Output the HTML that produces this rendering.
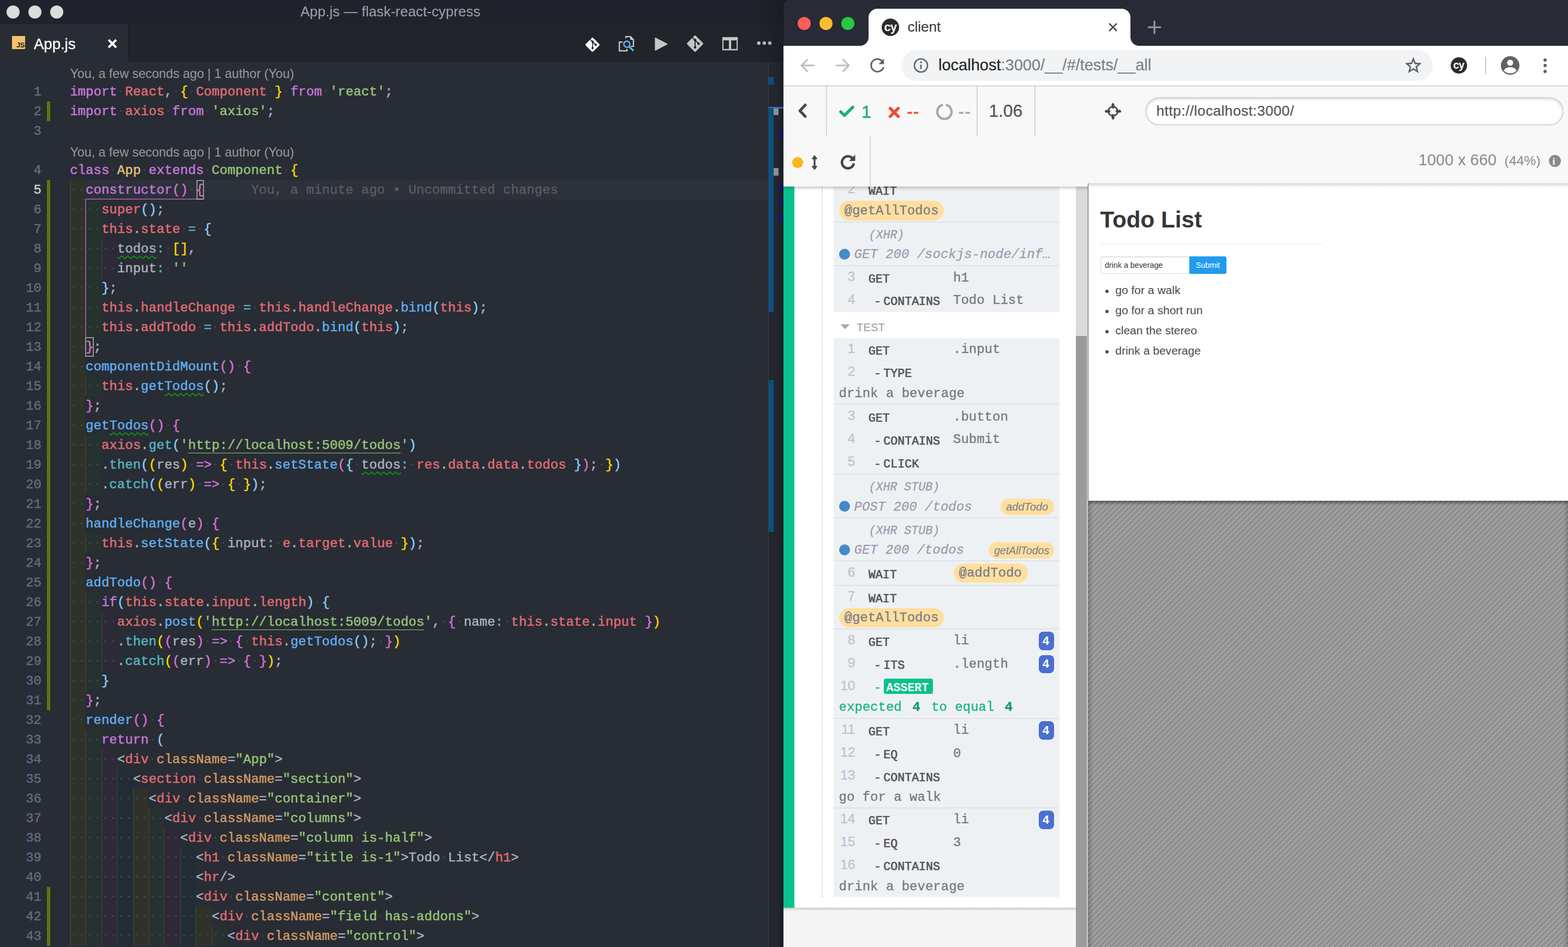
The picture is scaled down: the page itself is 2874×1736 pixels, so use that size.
<!DOCTYPE html>
<html lang="en">
<head>
<meta charset="utf-8">
<title>App.js — flask-react-cypress</title>
<style>
*{box-sizing:border-box;margin:0;padding:0}
html,body{width:2874px;height:1736px;overflow:hidden;background:#17181d}
body{position:relative;font-family:"Liberation Sans",sans-serif}
.abs,#vs div,#vs span,#ch div,#ch span,#ch svg,#vs svg{position:absolute}
#vs{position:absolute;left:0;top:0;width:1436px;height:1736px;background:#282c34;overflow:hidden}
#vs .title{left:0;top:0;width:1436px;height:44px;background:#20232b}
#vs .title .tt{left:0;width:1431px;top:-1px;height:44px;line-height:44px;text-align:center;color:#9da2ad;font-size:25.7px;letter-spacing:0.1px}
#vs .dot{width:24px;height:24px;border-radius:50%;background:#dcdcdc;top:10px}
#vs .tabs{left:0;top:44px;width:1436px;height:70px;background:#21252b}
#vs .tab{left:0;top:0;width:235.8px;height:70px;background:#282c34;border-right:1.6px solid #181a1f}
#vs .tab .nm{left:62px;top:2px;height:70px;line-height:70px;-webkit-text-stroke:0.3px #fff;color:#fff;font-size:27.5px}
#vs .jsic{left:22px;top:22px;width:24px;height:24px;background:#f5c26b}
#vs .jsic span{right:1px;bottom:0px;font-size:13px;line-height:14px;font-weight:bold;color:#21252b;letter-spacing:-0.5px}
#ed{left:0;top:0;width:1436px;height:1736px}
#ed .ln{left:0;width:76px;height:36px;margin-top:1px;-webkit-text-stroke:0.4px currentColor;line-height:36px;text-align:right;color:#636d83;font:24px/36px "Liberation Mono",monospace}
#ed .ln.cur{color:#d0d4dc}
#ed .cl{left:128.2px;height:36px;margin-top:1px;letter-spacing:0.03px;-webkit-text-stroke:0.5px currentColor;white-space:pre;font:24px/36px "Liberation Mono",monospace;color:#abb2bf}
#ed .cl b{font-weight:normal;position:relative}
#ed .cl i{font-style:normal;position:static;background:linear-gradient(90deg,transparent 5.4px,#3e4452 5.4px,#3e4452 8.4px,transparent 8.4px) 0 calc(50% - 0.9px)/14.43px 3px repeat-x}
#ed .cl .ul{text-decoration:underline;text-decoration-thickness:1.4px;text-underline-offset:6.5px;text-decoration-skip-ink:none}
#ed .cl .sq{background:repeating-linear-gradient(90deg,transparent 0,transparent 0) ;text-decoration:underline wavy #14901a;text-decoration-thickness:1.5px;text-underline-offset:5px;text-decoration-skip-ink:none}
#ed .cl .bx{outline:2px solid #8a8d93;outline-offset:-1px}
#ed .blame{color:#595c63;position:static}
#ed .rb{height:36px}
#ed .gbar{left:86px;width:6px;background:#587c0c}
#ed .curline{left:128px;width:1280px;height:36px;background:#2c313a}
#ed .lens{left:128.5px;height:36px;line-height:42px;font-size:23.2px;color:#999;white-space:pre}
#ed .sc{background:#955597}
#ed .bxx{width:16px;height:36px;border:2px solid #949494}
#ov{left:1408px;top:114px;width:28px;height:1622px;background:#23262e;border-left:1px solid #3a3d44}
#ov div{position:absolute}
#vs .shadow{left:1380px;top:0;width:56px;height:114px;background:linear-gradient(90deg,rgba(0,0,0,0),rgba(0,0,0,.2) 96%,rgba(0,0,0,.38) 100%)}
#vs .shadow2{left:1424px;top:114px;width:12px;height:1622px;background:linear-gradient(90deg,rgba(0,0,0,0),rgba(0,0,0,.22))}
#ch{position:absolute;left:1436px;top:0;width:1438px;height:1736px;background:#282a36;overflow:hidden;border-top-left-radius:9px}
</style>
</head>
<body>
<div id="vs">
<div class="tabs">
  <div class="tab"><div class="jsic"><span>JS</span></div><span class="nm">App.js</span>
  <svg style="left:197px;top:27px" width="18" height="18" viewBox="0 0 18 18"><path d="M2 2L16 16M16 2L2 16" stroke="#fff" stroke-width="4" fill="none"/></svg></div>
  <svg style="left:1070px;top:22px" width="32" height="32" viewBox="0 0 32 32"><rect x="6.3" y="6.3" width="19.4" height="19.4" rx="2" transform="rotate(45 16 16)" fill="#fff"/><path d="M11.6 6.2L16.2 10.6L21.6 16.2M16.2 10.6V22" stroke="#21252b" stroke-width="1.7" fill="none"/><circle cx="16.2" cy="10.4" r="2.1" fill="#21252b"/><circle cx="21.8" cy="16.2" r="2.1" fill="#21252b"/><circle cx="16.2" cy="22.1" r="2.1" fill="#21252b"/></svg>
<svg style="left:1130px;top:18px" width="36" height="36" viewBox="0 0 36 36"><path d="M17.2 8.3V5.2H25.6L31 10.6V23H26.5" stroke="#d0d0d0" stroke-width="2.2" fill="none"/><path d="M25.2 5.2V11H31Z" fill="#d0d0d0"/><path d="M11.5 15.2H5.2V31.2H19.2V27.5" stroke="#d0d0d0" stroke-width="2.2" fill="none"/><circle cx="19" cy="19.1" r="5.6" stroke="#6cbcf8" stroke-width="2.3" fill="none"/><path d="M23 23.3L31.2 31.2" stroke="#6cbcf8" stroke-width="3" fill="none"/></svg>
<svg style="left:1198px;top:22px" width="28" height="30" viewBox="0 0 28 30"><path d="M3.2 3.6L24.6 14.8L3.2 26Z" fill="#c5c5c5" stroke="#c5c5c5" stroke-width="1.6" stroke-linejoin="round"/></svg>
<svg style="left:1256px;top:18px" width="36" height="36" viewBox="0 0 36 36"><rect x="6.9" y="6.9" width="22.2" height="22.2" rx="2.2" transform="rotate(45 18 18)" fill="#c5c5c5"/><path d="M12.8 6.6L18 11.6L24.2 18M18 11.6V24.6" stroke="#21252b" stroke-width="1.9" fill="none"/><circle cx="18" cy="11.5" r="2.4" fill="#21252b"/><circle cx="24.4" cy="18.1" r="2.4" fill="#21252b"/><circle cx="18" cy="24.8" r="2.4" fill="#21252b"/></svg>
<svg style="left:1322px;top:22px" width="32" height="28" viewBox="0 0 32 28"><path d="M2 1.9H30.2V26.2H2ZM4.1 8.1V23.8H14V8.1ZM18.1 8.1V23.8H28.1V8.1Z" fill="#c5c5c5" fill-rule="evenodd"/></svg>
<svg style="left:1386px;top:30px" width="30" height="10" viewBox="0 0 30 10"><circle cx="4.8" cy="5" r="3.2" fill="#c5c5c5"/><circle cx="14.9" cy="5" r="3.2" fill="#c5c5c5"/><circle cx="25" cy="5" r="3.2" fill="#c5c5c5"/></svg>

</div>
<div id="ed">
<div class="curline" style="top:330px"></div>
<div class="gbar" style="top:186px;height:36px"></div>
<div class="gbar" style="top:330px;height:972px"></div>
<div class="gbar" style="top:1626px;height:108px"></div>
<div class="ln" style="top:150px">1</div>
<div class="ln" style="top:186px">2</div>
<div class="ln" style="top:222px">3</div>
<div class="ln" style="top:294px">4</div>
<div class="ln cur" style="top:330px">5</div>
<div class="rb" style="top:330px;left:128px;width:28px;background:#2f3228;border-left:2px solid #3c3f35"></div>
<div class="ln" style="top:366px">6</div>
<div class="rb" style="top:366px;left:128px;width:28px;background:#2f3228;border-left:2px solid #3c3f35"></div>
<div class="rb" style="top:366px;left:156px;width:30px;background:#25322e;border-left:2px solid #32403c"></div>
<div class="ln" style="top:402px">7</div>
<div class="rb" style="top:402px;left:128px;width:28px;background:#2f3228;border-left:2px solid #3c3f35"></div>
<div class="rb" style="top:402px;left:156px;width:30px;background:#25322e;border-left:2px solid #32403c"></div>
<div class="ln" style="top:438px">8</div>
<div class="rb" style="top:438px;left:128px;width:28px;background:#2f3228;border-left:2px solid #3c3f35"></div>
<div class="rb" style="top:438px;left:156px;width:30px;background:#25322e;border-left:2px solid #32403c"></div>
<div class="rb" style="top:438px;left:186px;width:28px;background:#2e2937;border-left:2px solid #3c3547"></div>
<div class="ln" style="top:474px">9</div>
<div class="rb" style="top:474px;left:128px;width:28px;background:#2f3228;border-left:2px solid #3c3f35"></div>
<div class="rb" style="top:474px;left:156px;width:30px;background:#25322e;border-left:2px solid #32403c"></div>
<div class="rb" style="top:474px;left:186px;width:28px;background:#2e2937;border-left:2px solid #3c3547"></div>
<div class="ln" style="top:510px">10</div>
<div class="rb" style="top:510px;left:128px;width:28px;background:#2f3228;border-left:2px solid #3c3f35"></div>
<div class="rb" style="top:510px;left:156px;width:30px;background:#25322e;border-left:2px solid #32403c"></div>
<div class="ln" style="top:546px">11</div>
<div class="rb" style="top:546px;left:128px;width:28px;background:#2f3228;border-left:2px solid #3c3f35"></div>
<div class="rb" style="top:546px;left:156px;width:30px;background:#25322e;border-left:2px solid #32403c"></div>
<div class="ln" style="top:582px">12</div>
<div class="rb" style="top:582px;left:128px;width:28px;background:#2f3228;border-left:2px solid #3c3f35"></div>
<div class="rb" style="top:582px;left:156px;width:30px;background:#25322e;border-left:2px solid #32403c"></div>
<div class="ln" style="top:618px">13</div>
<div class="rb" style="top:618px;left:128px;width:28px;background:#2f3228;border-left:2px solid #3c3f35"></div>
<div class="ln" style="top:654px">14</div>
<div class="rb" style="top:654px;left:128px;width:28px;background:#2f3228;border-left:2px solid #3c3f35"></div>
<div class="ln" style="top:690px">15</div>
<div class="rb" style="top:690px;left:128px;width:28px;background:#2f3228;border-left:2px solid #3c3f35"></div>
<div class="rb" style="top:690px;left:156px;width:30px;background:#25322e;border-left:2px solid #32403c"></div>
<div class="ln" style="top:726px">16</div>
<div class="rb" style="top:726px;left:128px;width:28px;background:#2f3228;border-left:2px solid #3c3f35"></div>
<div class="ln" style="top:762px">17</div>
<div class="rb" style="top:762px;left:128px;width:28px;background:#2f3228;border-left:2px solid #3c3f35"></div>
<div class="ln" style="top:798px">18</div>
<div class="rb" style="top:798px;left:128px;width:28px;background:#2f3228;border-left:2px solid #3c3f35"></div>
<div class="rb" style="top:798px;left:156px;width:30px;background:#25322e;border-left:2px solid #32403c"></div>
<div class="ln" style="top:834px">19</div>
<div class="rb" style="top:834px;left:128px;width:28px;background:#2f3228;border-left:2px solid #3c3f35"></div>
<div class="rb" style="top:834px;left:156px;width:30px;background:#25322e;border-left:2px solid #32403c"></div>
<div class="ln" style="top:870px">20</div>
<div class="rb" style="top:870px;left:128px;width:28px;background:#2f3228;border-left:2px solid #3c3f35"></div>
<div class="rb" style="top:870px;left:156px;width:30px;background:#25322e;border-left:2px solid #32403c"></div>
<div class="ln" style="top:906px">21</div>
<div class="rb" style="top:906px;left:128px;width:28px;background:#2f3228;border-left:2px solid #3c3f35"></div>
<div class="ln" style="top:942px">22</div>
<div class="rb" style="top:942px;left:128px;width:28px;background:#2f3228;border-left:2px solid #3c3f35"></div>
<div class="ln" style="top:978px">23</div>
<div class="rb" style="top:978px;left:128px;width:28px;background:#2f3228;border-left:2px solid #3c3f35"></div>
<div class="rb" style="top:978px;left:156px;width:30px;background:#25322e;border-left:2px solid #32403c"></div>
<div class="ln" style="top:1014px">24</div>
<div class="rb" style="top:1014px;left:128px;width:28px;background:#2f3228;border-left:2px solid #3c3f35"></div>
<div class="ln" style="top:1050px">25</div>
<div class="rb" style="top:1050px;left:128px;width:28px;background:#2f3228;border-left:2px solid #3c3f35"></div>
<div class="ln" style="top:1086px">26</div>
<div class="rb" style="top:1086px;left:128px;width:28px;background:#2f3228;border-left:2px solid #3c3f35"></div>
<div class="rb" style="top:1086px;left:156px;width:30px;background:#25322e;border-left:2px solid #32403c"></div>
<div class="ln" style="top:1122px">27</div>
<div class="rb" style="top:1122px;left:128px;width:28px;background:#2f3228;border-left:2px solid #3c3f35"></div>
<div class="rb" style="top:1122px;left:156px;width:30px;background:#25322e;border-left:2px solid #32403c"></div>
<div class="rb" style="top:1122px;left:186px;width:28px;background:#2e2937;border-left:2px solid #3c3547"></div>
<div class="ln" style="top:1158px">28</div>
<div class="rb" style="top:1158px;left:128px;width:28px;background:#2f3228;border-left:2px solid #3c3f35"></div>
<div class="rb" style="top:1158px;left:156px;width:30px;background:#25322e;border-left:2px solid #32403c"></div>
<div class="rb" style="top:1158px;left:186px;width:28px;background:#2e2937;border-left:2px solid #3c3547"></div>
<div class="ln" style="top:1194px">29</div>
<div class="rb" style="top:1194px;left:128px;width:28px;background:#2f3228;border-left:2px solid #3c3f35"></div>
<div class="rb" style="top:1194px;left:156px;width:30px;background:#25322e;border-left:2px solid #32403c"></div>
<div class="rb" style="top:1194px;left:186px;width:28px;background:#2e2937;border-left:2px solid #3c3547"></div>
<div class="ln" style="top:1230px">30</div>
<div class="rb" style="top:1230px;left:128px;width:28px;background:#2f3228;border-left:2px solid #3c3f35"></div>
<div class="rb" style="top:1230px;left:156px;width:30px;background:#25322e;border-left:2px solid #32403c"></div>
<div class="ln" style="top:1266px">31</div>
<div class="rb" style="top:1266px;left:128px;width:28px;background:#2f3228;border-left:2px solid #3c3f35"></div>
<div class="ln" style="top:1302px">32</div>
<div class="rb" style="top:1302px;left:128px;width:28px;background:#2f3228;border-left:2px solid #3c3f35"></div>
<div class="ln" style="top:1338px">33</div>
<div class="rb" style="top:1338px;left:128px;width:28px;background:#2f3228;border-left:2px solid #3c3f35"></div>
<div class="rb" style="top:1338px;left:156px;width:30px;background:#25322e;border-left:2px solid #32403c"></div>
<div class="ln" style="top:1374px">34</div>
<div class="rb" style="top:1374px;left:128px;width:28px;background:#2f3228;border-left:2px solid #3c3f35"></div>
<div class="rb" style="top:1374px;left:156px;width:30px;background:#25322e;border-left:2px solid #32403c"></div>
<div class="rb" style="top:1374px;left:186px;width:28px;background:#2e2937;border-left:2px solid #3c3547"></div>
<div class="ln" style="top:1410px">35</div>
<div class="rb" style="top:1410px;left:128px;width:28px;background:#2f3228;border-left:2px solid #3c3f35"></div>
<div class="rb" style="top:1410px;left:156px;width:30px;background:#25322e;border-left:2px solid #32403c"></div>
<div class="rb" style="top:1410px;left:186px;width:28px;background:#2e2937;border-left:2px solid #3c3547"></div>
<div class="rb" style="top:1410px;left:214px;width:30px;background:#212d34;border-left:2px solid #2d3c44"></div>
<div class="ln" style="top:1446px">36</div>
<div class="rb" style="top:1446px;left:128px;width:28px;background:#2f3228;border-left:2px solid #3c3f35"></div>
<div class="rb" style="top:1446px;left:156px;width:30px;background:#25322e;border-left:2px solid #32403c"></div>
<div class="rb" style="top:1446px;left:186px;width:28px;background:#2e2937;border-left:2px solid #3c3547"></div>
<div class="rb" style="top:1446px;left:214px;width:30px;background:#212d34;border-left:2px solid #2d3c44"></div>
<div class="rb" style="top:1446px;left:244px;width:28px;background:#2f3228;border-left:2px solid #3c3f35"></div>
<div class="ln" style="top:1482px">37</div>
<div class="rb" style="top:1482px;left:128px;width:28px;background:#2f3228;border-left:2px solid #3c3f35"></div>
<div class="rb" style="top:1482px;left:156px;width:30px;background:#25322e;border-left:2px solid #32403c"></div>
<div class="rb" style="top:1482px;left:186px;width:28px;background:#2e2937;border-left:2px solid #3c3547"></div>
<div class="rb" style="top:1482px;left:214px;width:30px;background:#212d34;border-left:2px solid #2d3c44"></div>
<div class="rb" style="top:1482px;left:244px;width:28px;background:#2f3228;border-left:2px solid #3c3f35"></div>
<div class="rb" style="top:1482px;left:272px;width:28px;background:#25322e;border-left:2px solid #32403c"></div>
<div class="ln" style="top:1518px">38</div>
<div class="rb" style="top:1518px;left:128px;width:28px;background:#2f3228;border-left:2px solid #3c3f35"></div>
<div class="rb" style="top:1518px;left:156px;width:30px;background:#25322e;border-left:2px solid #32403c"></div>
<div class="rb" style="top:1518px;left:186px;width:28px;background:#2e2937;border-left:2px solid #3c3547"></div>
<div class="rb" style="top:1518px;left:214px;width:30px;background:#212d34;border-left:2px solid #2d3c44"></div>
<div class="rb" style="top:1518px;left:244px;width:28px;background:#2f3228;border-left:2px solid #3c3f35"></div>
<div class="rb" style="top:1518px;left:272px;width:28px;background:#25322e;border-left:2px solid #32403c"></div>
<div class="rb" style="top:1518px;left:300px;width:30px;background:#2e2937;border-left:2px solid #3c3547"></div>
<div class="ln" style="top:1554px">39</div>
<div class="rb" style="top:1554px;left:128px;width:28px;background:#2f3228;border-left:2px solid #3c3f35"></div>
<div class="rb" style="top:1554px;left:156px;width:30px;background:#25322e;border-left:2px solid #32403c"></div>
<div class="rb" style="top:1554px;left:186px;width:28px;background:#2e2937;border-left:2px solid #3c3547"></div>
<div class="rb" style="top:1554px;left:214px;width:30px;background:#212d34;border-left:2px solid #2d3c44"></div>
<div class="rb" style="top:1554px;left:244px;width:28px;background:#2f3228;border-left:2px solid #3c3f35"></div>
<div class="rb" style="top:1554px;left:272px;width:28px;background:#25322e;border-left:2px solid #32403c"></div>
<div class="rb" style="top:1554px;left:300px;width:30px;background:#2e2937;border-left:2px solid #3c3547"></div>
<div class="rb" style="top:1554px;left:330px;width:28px;background:#212d34;border-left:2px solid #2d3c44"></div>
<div class="ln" style="top:1590px">40</div>
<div class="rb" style="top:1590px;left:128px;width:28px;background:#2f3228;border-left:2px solid #3c3f35"></div>
<div class="rb" style="top:1590px;left:156px;width:30px;background:#25322e;border-left:2px solid #32403c"></div>
<div class="rb" style="top:1590px;left:186px;width:28px;background:#2e2937;border-left:2px solid #3c3547"></div>
<div class="rb" style="top:1590px;left:214px;width:30px;background:#212d34;border-left:2px solid #2d3c44"></div>
<div class="rb" style="top:1590px;left:244px;width:28px;background:#2f3228;border-left:2px solid #3c3f35"></div>
<div class="rb" style="top:1590px;left:272px;width:28px;background:#25322e;border-left:2px solid #32403c"></div>
<div class="rb" style="top:1590px;left:300px;width:30px;background:#2e2937;border-left:2px solid #3c3547"></div>
<div class="rb" style="top:1590px;left:330px;width:28px;background:#212d34;border-left:2px solid #2d3c44"></div>
<div class="ln" style="top:1626px">41</div>
<div class="rb" style="top:1626px;left:128px;width:28px;background:#2f3228;border-left:2px solid #3c3f35"></div>
<div class="rb" style="top:1626px;left:156px;width:30px;background:#25322e;border-left:2px solid #32403c"></div>
<div class="rb" style="top:1626px;left:186px;width:28px;background:#2e2937;border-left:2px solid #3c3547"></div>
<div class="rb" style="top:1626px;left:214px;width:30px;background:#212d34;border-left:2px solid #2d3c44"></div>
<div class="rb" style="top:1626px;left:244px;width:28px;background:#2f3228;border-left:2px solid #3c3f35"></div>
<div class="rb" style="top:1626px;left:272px;width:28px;background:#25322e;border-left:2px solid #32403c"></div>
<div class="rb" style="top:1626px;left:300px;width:30px;background:#2e2937;border-left:2px solid #3c3547"></div>
<div class="rb" style="top:1626px;left:330px;width:28px;background:#212d34;border-left:2px solid #2d3c44"></div>
<div class="ln" style="top:1662px">42</div>
<div class="rb" style="top:1662px;left:128px;width:28px;background:#2f3228;border-left:2px solid #3c3f35"></div>
<div class="rb" style="top:1662px;left:156px;width:30px;background:#25322e;border-left:2px solid #32403c"></div>
<div class="rb" style="top:1662px;left:186px;width:28px;background:#2e2937;border-left:2px solid #3c3547"></div>
<div class="rb" style="top:1662px;left:214px;width:30px;background:#212d34;border-left:2px solid #2d3c44"></div>
<div class="rb" style="top:1662px;left:244px;width:28px;background:#2f3228;border-left:2px solid #3c3f35"></div>
<div class="rb" style="top:1662px;left:272px;width:28px;background:#25322e;border-left:2px solid #32403c"></div>
<div class="rb" style="top:1662px;left:300px;width:30px;background:#2e2937;border-left:2px solid #3c3547"></div>
<div class="rb" style="top:1662px;left:330px;width:28px;background:#212d34;border-left:2px solid #2d3c44"></div>
<div class="rb" style="top:1662px;left:358px;width:30px;background:#2f3228;border-left:2px solid #3c3f35"></div>
<div class="ln" style="top:1698px">43</div>
<div class="rb" style="top:1698px;left:128px;width:28px;background:#2f3228;border-left:2px solid #3c3f35"></div>
<div class="rb" style="top:1698px;left:156px;width:30px;background:#25322e;border-left:2px solid #32403c"></div>
<div class="rb" style="top:1698px;left:186px;width:28px;background:#2e2937;border-left:2px solid #3c3547"></div>
<div class="rb" style="top:1698px;left:214px;width:30px;background:#212d34;border-left:2px solid #2d3c44"></div>
<div class="rb" style="top:1698px;left:244px;width:28px;background:#2f3228;border-left:2px solid #3c3f35"></div>
<div class="rb" style="top:1698px;left:272px;width:28px;background:#25322e;border-left:2px solid #32403c"></div>
<div class="rb" style="top:1698px;left:300px;width:30px;background:#2e2937;border-left:2px solid #3c3547"></div>
<div class="rb" style="top:1698px;left:330px;width:28px;background:#212d34;border-left:2px solid #2d3c44"></div>
<div class="rb" style="top:1698px;left:358px;width:30px;background:#2f3228;border-left:2px solid #3c3f35"></div>
<div class="rb" style="top:1698px;left:388px;width:28px;background:#25322e;border-left:2px solid #32403c"></div>
<div class="sc" style="left:156px;top:364px;width:218px;height:2px"></div>
<div class="sc" style="left:156px;top:364px;width:1.8px;height:254px"></div>
<div class="bxx" style="left:360px;top:330px;width:14px;background:#25322e;border-bottom-color:#c98ac5"></div>
<div class="bxx" style="left:156px;top:618px;background:#25322e"></div>
<div class="cl" style="top:150px"><b style="color:#c678dd">import</b><i> </i><b style="color:#e06c75">React</b><b style="color:#abb2bf">,</b><i> </i><b style="color:#ffd700">{</b><i> </i><b style="color:#e06c75">Component</b><i> </i><b style="color:#ffd700">}</b><i> </i><b style="color:#c678dd">from</b><i> </i><b style="color:#98c379">'react'</b><b style="color:#abb2bf">;</b></div>
<div class="cl" style="top:186px"><b style="color:#c678dd">import</b><i> </i><b style="color:#e06c75">axios</b><i> </i><b style="color:#c678dd">from</b><i> </i><b style="color:#98c379">'axios'</b><b style="color:#abb2bf">;</b></div>
<div class="cl" style="top:294px"><b style="color:#c678dd">class</b><i> </i><b style="color:#e5c07b">App</b><i> </i><b style="color:#c678dd">extends</b><i> </i><b style="color:#98c379">Component</b><i> </i><b style="color:#ffd700">{</b></div>
<div class="cl" style="top:330px"><i>  </i><b style="color:#c678dd">constructor</b><b style="color:#da70d6">()</b><i> </i><b style="color:#da70d6">{</b><span class="blame">      You, a minute ago • Uncommitted changes</span></div>
<div class="cl" style="top:366px"><i>    </i><b style="color:#e06c75">super</b><b style="color:#87cefa">()</b><b style="color:#abb2bf">;</b></div>
<div class="cl" style="top:402px"><i>    </i><b style="color:#e06c75">this</b><b style="color:#abb2bf">.</b><b style="color:#e06c75">state</b><i> </i><b style="color:#56b6c2">=</b><i> </i><b style="color:#87cefa">{</b></div>
<div class="cl" style="top:438px"><i>      </i><b class="sq" style="color:#abb2bf">todos</b><b style="color:#56b6c2">:</b><i> </i><b style="color:#ffd700">[]</b><b style="color:#abb2bf">,</b></div>
<div class="cl" style="top:474px"><i>      </i><b style="color:#abb2bf">input</b><b style="color:#56b6c2">:</b><i> </i><b style="color:#98c379">''</b></div>
<div class="cl" style="top:510px"><i>    </i><b style="color:#87cefa">}</b><b style="color:#abb2bf">;</b></div>
<div class="cl" style="top:546px"><i>    </i><b style="color:#e06c75">this</b><b style="color:#abb2bf">.</b><b style="color:#e06c75">handleChange</b><i> </i><b style="color:#56b6c2">=</b><i> </i><b style="color:#e06c75">this</b><b style="color:#abb2bf">.</b><b style="color:#e06c75">handleChange</b><b style="color:#abb2bf">.</b><b style="color:#61afef">bind</b><b style="color:#87cefa">(</b><b style="color:#e06c75">this</b><b style="color:#87cefa">)</b><b style="color:#abb2bf">;</b></div>
<div class="cl" style="top:582px"><i>    </i><b style="color:#e06c75">this</b><b style="color:#abb2bf">.</b><b style="color:#e06c75">addTodo</b><i> </i><b style="color:#56b6c2">=</b><i> </i><b style="color:#e06c75">this</b><b style="color:#abb2bf">.</b><b style="color:#e06c75">addTodo</b><b style="color:#abb2bf">.</b><b style="color:#61afef">bind</b><b style="color:#87cefa">(</b><b style="color:#e06c75">this</b><b style="color:#87cefa">)</b><b style="color:#abb2bf">;</b></div>
<div class="cl" style="top:618px"><i>  </i><b style="color:#da70d6">}</b><b style="color:#abb2bf">;</b></div>
<div class="cl" style="top:654px"><i>  </i><b style="color:#61afef">componentDidMount</b><b style="color:#da70d6">()</b><i> </i><b style="color:#da70d6">{</b></div>
<div class="cl" style="top:690px"><i>    </i><b style="color:#e06c75">this</b><b style="color:#abb2bf">.</b><b style="color:#61afef">get</b><b class="sq" style="color:#61afef">Todos</b><b style="color:#87cefa">()</b><b style="color:#abb2bf">;</b></div>
<div class="cl" style="top:726px"><i>  </i><b style="color:#da70d6">}</b><b style="color:#abb2bf">;</b></div>
<div class="cl" style="top:762px"><i>  </i><b style="color:#61afef">get</b><b class="sq" style="color:#61afef">Todos</b><b style="color:#da70d6">()</b><i> </i><b style="color:#da70d6">{</b></div>
<div class="cl" style="top:798px"><i>    </i><b style="color:#e06c75">axios</b><b style="color:#abb2bf">.</b><b style="color:#56b6c2">get</b><b style="color:#87cefa">(</b><b style="color:#98c379">'</b><b class="ul" style="color:#98c379">http://localhost:5009/todos</b><b style="color:#98c379">'</b><b style="color:#87cefa">)</b></div>
<div class="cl" style="top:834px"><i>    </i><b style="color:#abb2bf">.</b><b style="color:#56b6c2">then</b><b style="color:#87cefa">(</b><b style="color:#ffd700">(</b><b style="color:#abb2bf">res</b><b style="color:#ffd700">)</b><i> </i><b style="color:#c678dd">=&gt;</b><i> </i><b style="color:#ffd700">{</b><i> </i><b style="color:#e06c75">this</b><b style="color:#abb2bf">.</b><b style="color:#61afef">setState</b><b style="color:#da70d6">(</b><b style="color:#87cefa">{</b><i> </i><b class="sq" style="color:#abb2bf">todos</b><b style="color:#56b6c2">:</b><i> </i><b style="color:#e06c75">res</b><b style="color:#abb2bf">.</b><b style="color:#e06c75">data</b><b style="color:#abb2bf">.</b><b style="color:#e06c75">data</b><b style="color:#abb2bf">.</b><b style="color:#e06c75">todos</b><i> </i><b style="color:#87cefa">}</b><b style="color:#da70d6">)</b><b style="color:#abb2bf">;</b><i> </i><b style="color:#ffd700">}</b><b style="color:#87cefa">)</b></div>
<div class="cl" style="top:870px"><i>    </i><b style="color:#abb2bf">.</b><b style="color:#56b6c2">catch</b><b style="color:#87cefa">(</b><b style="color:#ffd700">(</b><b style="color:#abb2bf">err</b><b style="color:#ffd700">)</b><i> </i><b style="color:#c678dd">=&gt;</b><i> </i><b style="color:#ffd700">{</b><i> </i><b style="color:#ffd700">}</b><b style="color:#87cefa">)</b><b style="color:#abb2bf">;</b></div>
<div class="cl" style="top:906px"><i>  </i><b style="color:#da70d6">}</b><b style="color:#abb2bf">;</b></div>
<div class="cl" style="top:942px"><i>  </i><b style="color:#61afef">handleChange</b><b style="color:#da70d6">(</b><b style="color:#abb2bf">e</b><b style="color:#da70d6">)</b><i> </i><b style="color:#da70d6">{</b></div>
<div class="cl" style="top:978px"><i>    </i><b style="color:#e06c75">this</b><b style="color:#abb2bf">.</b><b style="color:#61afef">setState</b><b style="color:#87cefa">(</b><b style="color:#ffd700">{</b><i> </i><b style="color:#abb2bf">input</b><b style="color:#56b6c2">:</b><i> </i><b style="color:#e06c75">e</b><b style="color:#abb2bf">.</b><b style="color:#e06c75">target</b><b style="color:#abb2bf">.</b><b style="color:#e06c75">value</b><i> </i><b style="color:#ffd700">}</b><b style="color:#87cefa">)</b><b style="color:#abb2bf">;</b></div>
<div class="cl" style="top:1014px"><i>  </i><b style="color:#da70d6">}</b><b style="color:#abb2bf">;</b></div>
<div class="cl" style="top:1050px"><i>  </i><b style="color:#61afef">addTodo</b><b style="color:#da70d6">()</b><i> </i><b style="color:#da70d6">{</b></div>
<div class="cl" style="top:1086px"><i>    </i><b style="color:#c678dd">if</b><b style="color:#87cefa">(</b><b style="color:#e06c75">this</b><b style="color:#abb2bf">.</b><b style="color:#e06c75">state</b><b style="color:#abb2bf">.</b><b style="color:#e06c75">input</b><b style="color:#abb2bf">.</b><b style="color:#e06c75">length</b><b style="color:#87cefa">)</b><i> </i><b style="color:#87cefa">{</b></div>
<div class="cl" style="top:1122px"><i>      </i><b style="color:#e06c75">axios</b><b style="color:#abb2bf">.</b><b style="color:#61afef">post</b><b style="color:#ffd700">(</b><b style="color:#98c379">'</b><b class="ul" style="color:#98c379">http://localhost:5009/todos</b><b style="color:#98c379">'</b><b style="color:#abb2bf">,</b><i> </i><b style="color:#da70d6">{</b><i> </i><b style="color:#abb2bf">name</b><b style="color:#56b6c2">:</b><i> </i><b style="color:#e06c75">this</b><b style="color:#abb2bf">.</b><b style="color:#e06c75">state</b><b style="color:#abb2bf">.</b><b style="color:#e06c75">input</b><i> </i><b style="color:#da70d6">}</b><b style="color:#ffd700">)</b></div>
<div class="cl" style="top:1158px"><i>      </i><b style="color:#abb2bf">.</b><b style="color:#56b6c2">then</b><b style="color:#ffd700">(</b><b style="color:#da70d6">(</b><b style="color:#abb2bf">res</b><b style="color:#da70d6">)</b><i> </i><b style="color:#c678dd">=&gt;</b><i> </i><b style="color:#da70d6">{</b><i> </i><b style="color:#e06c75">this</b><b style="color:#abb2bf">.</b><b style="color:#61afef">getTodos</b><b style="color:#87cefa">()</b><b style="color:#abb2bf">;</b><i> </i><b style="color:#da70d6">}</b><b style="color:#ffd700">)</b></div>
<div class="cl" style="top:1194px"><i>      </i><b style="color:#abb2bf">.</b><b style="color:#56b6c2">catch</b><b style="color:#ffd700">(</b><b style="color:#da70d6">(</b><b style="color:#abb2bf">err</b><b style="color:#da70d6">)</b><i> </i><b style="color:#c678dd">=&gt;</b><i> </i><b style="color:#da70d6">{</b><i> </i><b style="color:#da70d6">}</b><b style="color:#ffd700">)</b><b style="color:#abb2bf">;</b></div>
<div class="cl" style="top:1230px"><i>    </i><b style="color:#87cefa">}</b></div>
<div class="cl" style="top:1266px"><i>  </i><b style="color:#da70d6">}</b><b style="color:#abb2bf">;</b></div>
<div class="cl" style="top:1302px"><i>  </i><b style="color:#61afef">render</b><b style="color:#da70d6">()</b><i> </i><b style="color:#da70d6">{</b></div>
<div class="cl" style="top:1338px"><i>    </i><b style="color:#c678dd">return</b><i> </i><b style="color:#87cefa">(</b></div>
<div class="cl" style="top:1374px"><i>      </i><b style="color:#abb2bf">&lt;</b><b style="color:#e06c75">div</b><i> </i><b style="color:#d19a66">className</b><b style="color:#abb2bf">=</b><b style="color:#98c379">"App"</b><b style="color:#abb2bf">&gt;</b></div>
<div class="cl" style="top:1410px"><i>        </i><b style="color:#abb2bf">&lt;</b><b style="color:#e06c75">section</b><i> </i><b style="color:#d19a66">className</b><b style="color:#abb2bf">=</b><b style="color:#98c379">"section"</b><b style="color:#abb2bf">&gt;</b></div>
<div class="cl" style="top:1446px"><i>          </i><b style="color:#abb2bf">&lt;</b><b style="color:#e06c75">div</b><i> </i><b style="color:#d19a66">className</b><b style="color:#abb2bf">=</b><b style="color:#98c379">"container"</b><b style="color:#abb2bf">&gt;</b></div>
<div class="cl" style="top:1482px"><i>            </i><b style="color:#abb2bf">&lt;</b><b style="color:#e06c75">div</b><i> </i><b style="color:#d19a66">className</b><b style="color:#abb2bf">=</b><b style="color:#98c379">"columns"</b><b style="color:#abb2bf">&gt;</b></div>
<div class="cl" style="top:1518px"><i>              </i><b style="color:#abb2bf">&lt;</b><b style="color:#e06c75">div</b><i> </i><b style="color:#d19a66">className</b><b style="color:#abb2bf">=</b><b style="color:#98c379">"column<i> </i>is-half"</b><b style="color:#abb2bf">&gt;</b></div>
<div class="cl" style="top:1554px"><i>                </i><b style="color:#abb2bf">&lt;</b><b style="color:#e06c75">h1</b><i> </i><b style="color:#d19a66">className</b><b style="color:#abb2bf">=</b><b style="color:#98c379">"title<i> </i>is-1"</b><b style="color:#abb2bf">&gt;</b><b style="color:#abb2bf">Todo<i> </i>List</b><b style="color:#abb2bf">&lt;/</b><b style="color:#e06c75">h1</b><b style="color:#abb2bf">&gt;</b></div>
<div class="cl" style="top:1590px"><i>                </i><b style="color:#abb2bf">&lt;</b><b style="color:#e06c75">hr</b><b style="color:#abb2bf">/&gt;</b></div>
<div class="cl" style="top:1626px"><i>                </i><b style="color:#abb2bf">&lt;</b><b style="color:#e06c75">div</b><i> </i><b style="color:#d19a66">className</b><b style="color:#abb2bf">=</b><b style="color:#98c379">"content"</b><b style="color:#abb2bf">&gt;</b></div>
<div class="cl" style="top:1662px"><i>                  </i><b style="color:#abb2bf">&lt;</b><b style="color:#e06c75">div</b><i> </i><b style="color:#d19a66">className</b><b style="color:#abb2bf">=</b><b style="color:#98c379">"field<i> </i>has-addons"</b><b style="color:#abb2bf">&gt;</b></div>
<div class="cl" style="top:1698px"><i>                    </i><b style="color:#abb2bf">&lt;</b><b style="color:#e06c75">div</b><i> </i><b style="color:#d19a66">className</b><b style="color:#abb2bf">=</b><b style="color:#98c379">"control"</b><b style="color:#abb2bf">&gt;</b></div>
<div class="lens" style="top:114px">You, a few seconds ago | 1 author (You)</div>
<div class="lens" style="top:258px">You, a few seconds ago | 1 author (You)</div>
</div>
<div id="ov">
  <div style="left:0;top:27px;width:9px;height:14px;background:#0a5083"></div>
  <div style="left:0;top:82px;width:28px;height:3px;background:#3f6fd0"></div>
  <div style="left:0;top:84px;width:9px;height:374px;background:#0a5083"></div>
  <div style="left:0;top:583px;width:9px;height:278px;background:#0a5083"></div>
  <div style="left:9px;top:85px;width:9px;height:12px;background:#8e8e8e"></div>
  <div style="left:9px;top:194px;width:9px;height:14px;background:#8e8e8e"></div>
  <div style="left:18px;top:125px;width:10px;height:13px;background:#1a1a6a"></div>
  <div style="left:18px;top:222px;width:10px;height:14px;background:#1a1a6a"></div>
  <div style="left:18px;top:250px;width:10px;height:13px;background:#1a1a6a"></div>
  <div style="left:18px;top:277px;width:10px;height:14px;background:#1a1a6a"></div>
</div>
<div class="title"><div class="dot" style="left:12px"></div><div class="dot" style="left:52px"></div><div class="dot" style="left:92px"></div><div class="tt">App.js — flask-react-cypress</div></div>
<div class="shadow"></div><div class="shadow2"></div>
</div>
<div id="ch">
<div style="left:558.00px;top:336.00px;width:880.00px;height:1400.00px;background:#9e9e9e;background-image:repeating-linear-gradient(135deg,#868686 0,#868686 1.9px,#9e9e9e 1.9px,#9e9e9e 7.07px);"></div>
<div style="left:559.00px;top:918.00px;width:879.00px;height:8.00px;background:transparent;background:linear-gradient(180deg,rgba(0,0,0,.42),rgba(0,0,0,0));"></div>
<div style="left:558.20px;top:918.00px;width:10.00px;height:818.00px;background:transparent;background:linear-gradient(90deg,rgba(0,0,0,.18),rgba(0,0,0,0));"></div>
<div style="left:1430.00px;top:918.00px;width:8.00px;height:818.00px;background:transparent;background:linear-gradient(270deg,rgba(0,0,0,.16),rgba(0,0,0,0));"></div>
<div style="left:559.00px;top:336.00px;width:879.00px;height:582.00px;background:#fff;"></div>
<span style="top:381.81px;font-size:42.15px;line-height:42.15px;color:#363636;white-space:pre;left:580.50px;font-weight:bold;">Todo List</span>
<div style="left:580.00px;top:446.50px;width:409.00px;height:2.00px;background:#f5f5f5;"></div>
<div style="left:580.50px;top:470.20px;width:164.00px;height:31.60px;background:#fff;border:1px solid #dbdbdb;border-radius:3.5px 0 0 3.5px;box-shadow:inset 0 1px 2px rgba(10,10,10,.1);"></div>
<span style="top:479.02px;font-size:14.27px;line-height:14.27px;color:#363636;white-space:pre;left:589.00px;">drink a beverage</span>
<div style="left:744.40px;top:470.20px;width:67.60px;height:31.60px;background:#209cee;border-radius:0 3.5px 3.5px 0;"></div>
<span style="top:479.12px;font-size:14.15px;line-height:14.15px;color:#fff;white-space:pre;left:756.00px;">Submit</span>
<div style="left:589.70px;top:530.70px;width:6.60px;height:6.60px;background:#4a4a4a;border-radius:50%;"></div>
<span style="top:521.27px;font-size:21.06px;line-height:21.06px;color:#4a4a4a;white-space:pre;left:608.20px;">go for a walk</span>
<div style="left:589.70px;top:567.70px;width:6.60px;height:6.60px;background:#4a4a4a;border-radius:50%;"></div>
<span style="top:558.27px;font-size:21.06px;line-height:21.06px;color:#4a4a4a;white-space:pre;left:608.20px;">go for a short run</span>
<div style="left:589.70px;top:604.70px;width:6.60px;height:6.60px;background:#4a4a4a;border-radius:50%;"></div>
<span style="top:595.27px;font-size:21.06px;line-height:21.06px;color:#4a4a4a;white-space:pre;left:608.20px;">clean the stereo</span>
<div style="left:589.70px;top:641.70px;width:6.60px;height:6.60px;background:#4a4a4a;border-radius:50%;"></div>
<span style="top:632.27px;font-size:21.06px;line-height:21.06px;color:#4a4a4a;white-space:pre;left:608.20px;">drink a beverage</span>
<div style="left:0.00px;top:342.00px;width:536.00px;height:1322.00px;background:#fff;"></div>
<div style="left:0.00px;top:1664.00px;width:536.00px;height:72.00px;background:#f5f5f5;"></div>
<div style="left:0.00px;top:1664.00px;width:536.00px;height:6.00px;background:transparent;background:linear-gradient(180deg,rgba(0,0,0,.18),rgba(0,0,0,0));"></div>
<div style="left:0.00px;top:342.00px;width:20.00px;height:1322.00px;background:#08c18d;"></div>
<div style="left:70.00px;top:342.00px;width:2.00px;height:1302.00px;background:transparent;background:repeating-linear-gradient(180deg,#cfcfcf 0,#cfcfcf 2px,transparent 2px,transparent 4px);"></div>
<div style="left:536.00px;top:342.00px;width:20.20px;height:1394.00px;background:#dadada;"></div>
<div style="left:536.00px;top:616.00px;width:20.20px;height:1120.00px;background:#9b9b9b;"></div>
<div style="left:556.00px;top:336.00px;width:2.20px;height:1400.00px;background:#cecece;"></div>
<div style="left:558.00px;top:336.00px;width:1.00px;height:582.00px;background:#6a6a6a;"></div>
<div style="left:92.00px;top:342.00px;width:414.00px;height:229.70px;background:#eef1f4;"></div>
<div style="left:92.00px;top:619.80px;width:414.00px;height:1024.00px;background:#eef1f4;"></div>
<div style="left:92.00px;top:406.00px;width:414.00px;height:2.00px;background:#e1e3e6;"></div>
<div style="left:92.00px;top:485.60px;width:414.00px;height:2.00px;background:#e1e3e6;"></div>
<div style="left:92.00px;top:740.00px;width:414.00px;height:2.00px;background:#e1e3e6;"></div>
<div style="left:92.00px;top:868.00px;width:414.00px;height:2.00px;background:#e1e3e6;"></div>
<div style="left:92.00px;top:948.00px;width:414.00px;height:2.00px;background:#e1e3e6;"></div>
<div style="left:92.00px;top:1027.30px;width:414.00px;height:2.00px;background:#e1e3e6;"></div>
<div style="left:92.00px;top:1072.00px;width:414.00px;height:2.00px;background:#e1e3e6;"></div>
<div style="left:92.00px;top:1151.80px;width:414.00px;height:2.00px;background:#e1e3e6;"></div>
<div style="left:92.00px;top:1316.00px;width:414.00px;height:2.00px;background:#e1e3e6;"></div>
<div style="left:92.00px;top:1479.70px;width:414.00px;height:2.00px;background:#e1e3e6;"></div>
<span style="top:334.17px;font-size:24.6px;line-height:24.6px;color:#c3c0d3;white-space:pre;right:1306.50px;-webkit-text-stroke:0.4px;">2</span>
<span style="top:340.95px;font-size:21.6px;line-height:21.6px;color:#555;white-space:pre;left:155.80px;font-family:'Liberation Mono',monospace;-webkit-text-stroke:0.7px;">WAIT</span>
<div style="left:102.00px;top:368.00px;width:192.00px;height:35.80px;background:#ffdf9d;border-radius:17.9px;"></div>
<span style="top:374.61px;font-size:24px;line-height:24px;color:#7a7a8c;white-space:pre;left:111.50px;font-family:'Liberation Mono',monospace;-webkit-text-stroke:0.3px;">@getAllTodos</span>
<span style="top:421.25px;font-size:21.6px;line-height:21.6px;color:#9c9aad;white-space:pre;left:156.50px;font-family:'Liberation Mono',monospace;font-style:italic;-webkit-text-stroke:0.3px;">(XHR)</span>
<div style="left:102.00px;top:455.60px;width:20.00px;height:20.00px;background:#428bca;border-radius:50%;"></div>
<span style="top:455.21px;font-size:24px;line-height:24px;color:#9c9aad;white-space:pre;left:129.50px;font-family:'Liberation Mono',monospace;font-style:italic;-webkit-text-stroke:0.3px;">GET 200 /sockjs-node/inf…</span>
<span style="top:495.17px;font-size:24.6px;line-height:24.6px;color:#c3c0d3;white-space:pre;right:1306.50px;-webkit-text-stroke:0.4px;">3</span>
<span style="top:501.95px;font-size:21.6px;line-height:21.6px;color:#555;white-space:pre;left:155.80px;font-family:'Liberation Mono',monospace;-webkit-text-stroke:0.7px;">GET</span>
<span style="top:497.61px;font-size:24px;line-height:24px;color:#777;white-space:pre;left:311.00px;font-family:'Liberation Mono',monospace;-webkit-text-stroke:0.3px;">h1</span>
<span style="top:536.67px;font-size:24.6px;line-height:24.6px;color:#c3c0d3;white-space:pre;right:1306.50px;-webkit-text-stroke:0.4px;">4</span>
<span style="top:543.45px;font-size:21.6px;line-height:21.6px;color:#555;white-space:pre;left:166.00px;font-family:'Liberation Mono',monospace;-webkit-text-stroke:0.7px;">-</span>
<span style="top:543.45px;font-size:21.6px;line-height:21.6px;color:#555;white-space:pre;left:183.30px;font-family:'Liberation Mono',monospace;-webkit-text-stroke:0.7px;">CONTAINS</span>
<span style="top:539.11px;font-size:24px;line-height:24px;color:#777;white-space:pre;left:311.00px;font-family:'Liberation Mono',monospace;-webkit-text-stroke:0.3px;">Todo List</span>
<svg style="left:103.5px;top:593.5px" width="18" height="10" viewBox="0 0 18 10"><path d="M0.5 0.5H17.5L9 9.5Z" fill="#aaa"/></svg>
<span style="top:590.11px;font-size:20.3px;line-height:20.3px;color:#999;white-space:pre;left:134.00px;">TEST</span>
<span style="top:626.87px;font-size:24.6px;line-height:24.6px;color:#c3c0d3;white-space:pre;right:1306.50px;-webkit-text-stroke:0.4px;">1</span>
<span style="top:633.65px;font-size:21.6px;line-height:21.6px;color:#555;white-space:pre;left:155.80px;font-family:'Liberation Mono',monospace;-webkit-text-stroke:0.7px;">GET</span>
<span style="top:629.31px;font-size:24px;line-height:24px;color:#777;white-space:pre;left:311.00px;font-family:'Liberation Mono',monospace;-webkit-text-stroke:0.3px;">.input</span>
<span style="top:668.67px;font-size:24.6px;line-height:24.6px;color:#c3c0d3;white-space:pre;right:1306.50px;-webkit-text-stroke:0.4px;">2</span>
<span style="top:675.45px;font-size:21.6px;line-height:21.6px;color:#555;white-space:pre;left:166.00px;font-family:'Liberation Mono',monospace;-webkit-text-stroke:0.7px;">-</span>
<span style="top:675.45px;font-size:21.6px;line-height:21.6px;color:#555;white-space:pre;left:183.30px;font-family:'Liberation Mono',monospace;-webkit-text-stroke:0.7px;">TYPE</span>
<span style="top:709.61px;font-size:24px;line-height:24px;color:#777;white-space:pre;left:101.50px;font-family:'Liberation Mono',monospace;-webkit-text-stroke:0.3px;">drink a beverage</span>
<span style="top:750.17px;font-size:24.6px;line-height:24.6px;color:#c3c0d3;white-space:pre;right:1306.50px;-webkit-text-stroke:0.4px;">3</span>
<span style="top:756.95px;font-size:21.6px;line-height:21.6px;color:#555;white-space:pre;left:155.80px;font-family:'Liberation Mono',monospace;-webkit-text-stroke:0.7px;">GET</span>
<span style="top:752.61px;font-size:24px;line-height:24px;color:#777;white-space:pre;left:311.00px;font-family:'Liberation Mono',monospace;-webkit-text-stroke:0.3px;">.button</span>
<span style="top:791.97px;font-size:24.6px;line-height:24.6px;color:#c3c0d3;white-space:pre;right:1306.50px;-webkit-text-stroke:0.4px;">4</span>
<span style="top:798.75px;font-size:21.6px;line-height:21.6px;color:#555;white-space:pre;left:166.00px;font-family:'Liberation Mono',monospace;-webkit-text-stroke:0.7px;">-</span>
<span style="top:798.75px;font-size:21.6px;line-height:21.6px;color:#555;white-space:pre;left:183.30px;font-family:'Liberation Mono',monospace;-webkit-text-stroke:0.7px;">CONTAINS</span>
<span style="top:794.41px;font-size:24px;line-height:24px;color:#777;white-space:pre;left:311.00px;font-family:'Liberation Mono',monospace;-webkit-text-stroke:0.3px;">Submit</span>
<span style="top:833.97px;font-size:24.6px;line-height:24.6px;color:#c3c0d3;white-space:pre;right:1306.50px;-webkit-text-stroke:0.4px;">5</span>
<span style="top:840.75px;font-size:21.6px;line-height:21.6px;color:#555;white-space:pre;left:166.00px;font-family:'Liberation Mono',monospace;-webkit-text-stroke:0.7px;">-</span>
<span style="top:840.75px;font-size:21.6px;line-height:21.6px;color:#555;white-space:pre;left:183.30px;font-family:'Liberation Mono',monospace;-webkit-text-stroke:0.7px;">CLICK</span>
<span style="top:882.85px;font-size:21.6px;line-height:21.6px;color:#9c9aad;white-space:pre;left:156.50px;font-family:'Liberation Mono',monospace;font-style:italic;-webkit-text-stroke:0.3px;">(XHR STUB)</span>
<div style="left:102.00px;top:918.20px;width:20.00px;height:20.00px;background:#428bca;border-radius:50%;"></div>
<span style="top:917.81px;font-size:24px;line-height:24px;color:#9c9aad;white-space:pre;left:129.50px;font-family:'Liberation Mono',monospace;font-style:italic;-webkit-text-stroke:0.3px;">POST 200 /todos</span>
<div style="left:398.00px;top:914.00px;width:98.00px;height:30.00px;background:#ffdf9d;border-radius:15px;"></div>
<span style="top:919.37px;font-size:20px;line-height:20px;color:#7a7a8c;white-space:pre;left:408.00px;font-style:italic;">addTodo</span>
<span style="top:962.85px;font-size:21.6px;line-height:21.6px;color:#9c9aad;white-space:pre;left:156.50px;font-family:'Liberation Mono',monospace;font-style:italic;-webkit-text-stroke:0.3px;">(XHR STUB)</span>
<div style="left:102.00px;top:997.80px;width:20.00px;height:20.00px;background:#428bca;border-radius:50%;"></div>
<span style="top:997.41px;font-size:24px;line-height:24px;color:#9c9aad;white-space:pre;left:129.50px;font-family:'Liberation Mono',monospace;font-style:italic;-webkit-text-stroke:0.3px;">GET 200 /todos</span>
<div style="left:376.00px;top:994.00px;width:120.00px;height:30.00px;background:#ffdf9d;border-radius:15px;"></div>
<span style="top:999.79px;font-size:19.5px;line-height:19.5px;color:#7a7a8c;white-space:pre;left:386.00px;font-style:italic;">getAllTodos</span>
<span style="top:1036.77px;font-size:24.6px;line-height:24.6px;color:#c3c0d3;white-space:pre;right:1306.50px;-webkit-text-stroke:0.4px;">6</span>
<span style="top:1043.55px;font-size:21.6px;line-height:21.6px;color:#555;white-space:pre;left:155.80px;font-family:'Liberation Mono',monospace;-webkit-text-stroke:0.7px;">WAIT</span>
<div style="left:312.00px;top:1032.50px;width:136.00px;height:35.30px;background:#ffdf9d;border-radius:17.6px;"></div>
<span style="top:1039.21px;font-size:24px;line-height:24px;color:#7a7a8c;white-space:pre;left:321.50px;font-family:'Liberation Mono',monospace;-webkit-text-stroke:0.3px;">@addTodo</span>
<span style="top:1080.77px;font-size:24.6px;line-height:24.6px;color:#c3c0d3;white-space:pre;right:1306.50px;-webkit-text-stroke:0.4px;">7</span>
<span style="top:1087.55px;font-size:21.6px;line-height:21.6px;color:#555;white-space:pre;left:155.80px;font-family:'Liberation Mono',monospace;-webkit-text-stroke:0.7px;">WAIT</span>
<div style="left:102.00px;top:1114.50px;width:192.00px;height:35.30px;background:#ffdf9d;border-radius:17.6px;"></div>
<span style="top:1120.51px;font-size:24px;line-height:24px;color:#7a7a8c;white-space:pre;left:111.50px;font-family:'Liberation Mono',monospace;-webkit-text-stroke:0.3px;">@getAllTodos</span>
<span style="top:1160.87px;font-size:24.6px;line-height:24.6px;color:#c3c0d3;white-space:pre;right:1306.50px;-webkit-text-stroke:0.4px;">8</span>
<span style="top:1167.65px;font-size:21.6px;line-height:21.6px;color:#555;white-space:pre;left:155.80px;font-family:'Liberation Mono',monospace;-webkit-text-stroke:0.7px;">GET</span>
<span style="top:1163.31px;font-size:24px;line-height:24px;color:#777;white-space:pre;left:311.00px;font-family:'Liberation Mono',monospace;-webkit-text-stroke:0.3px;">li</span>
<div style="left:468.00px;top:1158.30px;width:28.00px;height:33.60px;background:#4a6fd0;border-radius:8px;"></div>
<span style="top:1164.07px;font-size:22px;line-height:22px;color:#fff;white-space:pre;left:474.70px;font-weight:bold;">4</span>
<span style="top:1203.07px;font-size:24.6px;line-height:24.6px;color:#c3c0d3;white-space:pre;right:1306.50px;-webkit-text-stroke:0.4px;">9</span>
<span style="top:1209.85px;font-size:21.6px;line-height:21.6px;color:#555;white-space:pre;left:166.00px;font-family:'Liberation Mono',monospace;-webkit-text-stroke:0.7px;">-</span>
<span style="top:1209.85px;font-size:21.6px;line-height:21.6px;color:#555;white-space:pre;left:183.30px;font-family:'Liberation Mono',monospace;-webkit-text-stroke:0.7px;">ITS</span>
<span style="top:1205.51px;font-size:24px;line-height:24px;color:#777;white-space:pre;left:311.00px;font-family:'Liberation Mono',monospace;-webkit-text-stroke:0.3px;">.length</span>
<div style="left:468.00px;top:1200.50px;width:28.00px;height:33.60px;background:#4a6fd0;border-radius:8px;"></div>
<span style="top:1206.27px;font-size:22px;line-height:22px;color:#fff;white-space:pre;left:474.70px;font-weight:bold;">4</span>
<span style="top:1244.57px;font-size:24.6px;line-height:24.6px;color:#c3c0d3;white-space:pre;right:1306.50px;-webkit-text-stroke:0.4px;">10</span>
<span style="top:1251.35px;font-size:21.6px;line-height:21.6px;color:#08c18d;white-space:pre;left:166.00px;font-family:'Liberation Mono',monospace;-webkit-text-stroke:0.7px;">-</span>
<div style="left:184.00px;top:1244.20px;width:90.00px;height:28.00px;background:#08c18d;border-radius:4px;"></div>
<span style="top:1251.35px;font-size:21.6px;line-height:21.6px;color:#fff;white-space:pre;left:188.50px;font-family:'Liberation Mono',monospace;font-weight:bold;">ASSERT</span>
<span style="left:101.50px;top:1285.11px;font-size:24px;line-height:24px;color:#11b487;white-space:pre;-webkit-text-stroke:0.3px;font-family:'Liberation Mono',monospace">expected <b style="color:#0a996f;margin:0 6px 0 5px">4</b> to equal <b style="color:#0a996f;margin:0 6px 0 5px">4</b></span>
<span style="top:1324.77px;font-size:24.6px;line-height:24.6px;color:#c3c0d3;white-space:pre;right:1306.50px;-webkit-text-stroke:0.4px;">11</span>
<span style="top:1331.55px;font-size:21.6px;line-height:21.6px;color:#555;white-space:pre;left:155.80px;font-family:'Liberation Mono',monospace;-webkit-text-stroke:0.7px;">GET</span>
<span style="top:1327.21px;font-size:24px;line-height:24px;color:#777;white-space:pre;left:311.00px;font-family:'Liberation Mono',monospace;-webkit-text-stroke:0.3px;">li</span>
<div style="left:468.00px;top:1322.20px;width:28.00px;height:33.60px;background:#4a6fd0;border-radius:8px;"></div>
<span style="top:1327.97px;font-size:22px;line-height:22px;color:#fff;white-space:pre;left:474.70px;font-weight:bold;">4</span>
<span style="top:1367.07px;font-size:24.6px;line-height:24.6px;color:#c3c0d3;white-space:pre;right:1306.50px;-webkit-text-stroke:0.4px;">12</span>
<span style="top:1373.85px;font-size:21.6px;line-height:21.6px;color:#555;white-space:pre;left:166.00px;font-family:'Liberation Mono',monospace;-webkit-text-stroke:0.7px;">-</span>
<span style="top:1373.85px;font-size:21.6px;line-height:21.6px;color:#555;white-space:pre;left:183.30px;font-family:'Liberation Mono',monospace;-webkit-text-stroke:0.7px;">EQ</span>
<span style="top:1369.51px;font-size:24px;line-height:24px;color:#777;white-space:pre;left:311.00px;font-family:'Liberation Mono',monospace;-webkit-text-stroke:0.3px;">0</span>
<span style="top:1409.27px;font-size:24.6px;line-height:24.6px;color:#c3c0d3;white-space:pre;right:1306.50px;-webkit-text-stroke:0.4px;">13</span>
<span style="top:1416.05px;font-size:21.6px;line-height:21.6px;color:#555;white-space:pre;left:166.00px;font-family:'Liberation Mono',monospace;-webkit-text-stroke:0.7px;">-</span>
<span style="top:1416.05px;font-size:21.6px;line-height:21.6px;color:#555;white-space:pre;left:183.30px;font-family:'Liberation Mono',monospace;-webkit-text-stroke:0.7px;">CONTAINS</span>
<span style="top:1449.61px;font-size:24px;line-height:24px;color:#777;white-space:pre;left:101.50px;font-family:'Liberation Mono',monospace;-webkit-text-stroke:0.3px;">go for a walk</span>
<span style="top:1488.67px;font-size:24.6px;line-height:24.6px;color:#c3c0d3;white-space:pre;right:1306.50px;-webkit-text-stroke:0.4px;">14</span>
<span style="top:1495.45px;font-size:21.6px;line-height:21.6px;color:#555;white-space:pre;left:155.80px;font-family:'Liberation Mono',monospace;-webkit-text-stroke:0.7px;">GET</span>
<span style="top:1491.11px;font-size:24px;line-height:24px;color:#777;white-space:pre;left:311.00px;font-family:'Liberation Mono',monospace;-webkit-text-stroke:0.3px;">li</span>
<div style="left:468.00px;top:1486.10px;width:28.00px;height:33.60px;background:#4a6fd0;border-radius:8px;"></div>
<span style="top:1491.87px;font-size:22px;line-height:22px;color:#fff;white-space:pre;left:474.70px;font-weight:bold;">4</span>
<span style="top:1530.67px;font-size:24.6px;line-height:24.6px;color:#c3c0d3;white-space:pre;right:1306.50px;-webkit-text-stroke:0.4px;">15</span>
<span style="top:1537.45px;font-size:21.6px;line-height:21.6px;color:#555;white-space:pre;left:166.00px;font-family:'Liberation Mono',monospace;-webkit-text-stroke:0.7px;">-</span>
<span style="top:1537.45px;font-size:21.6px;line-height:21.6px;color:#555;white-space:pre;left:183.30px;font-family:'Liberation Mono',monospace;-webkit-text-stroke:0.7px;">EQ</span>
<span style="top:1533.11px;font-size:24px;line-height:24px;color:#777;white-space:pre;left:311.00px;font-family:'Liberation Mono',monospace;-webkit-text-stroke:0.3px;">3</span>
<span style="top:1572.67px;font-size:24.6px;line-height:24.6px;color:#c3c0d3;white-space:pre;right:1306.50px;-webkit-text-stroke:0.4px;">16</span>
<span style="top:1579.45px;font-size:21.6px;line-height:21.6px;color:#555;white-space:pre;left:166.00px;font-family:'Liberation Mono',monospace;-webkit-text-stroke:0.7px;">-</span>
<span style="top:1579.45px;font-size:21.6px;line-height:21.6px;color:#555;white-space:pre;left:183.30px;font-family:'Liberation Mono',monospace;-webkit-text-stroke:0.7px;">CONTAINS</span>
<span style="top:1613.61px;font-size:24px;line-height:24px;color:#777;white-space:pre;left:101.50px;font-family:'Liberation Mono',monospace;-webkit-text-stroke:0.3px;">drink a beverage</span>
<div style="left:0.00px;top:158.00px;width:1438.00px;height:178.00px;background:#f8f8f8;"></div>
<div style="left:0.00px;top:158.00px;width:558.00px;height:184.00px;background:#f8f8f8;"></div>
<div style="left:0.00px;top:342.00px;width:558.00px;height:8.00px;background:transparent;background:linear-gradient(180deg,rgba(0,0,0,.2),rgba(0,0,0,.05) 60%,rgba(0,0,0,0));"></div>
<div style="left:559.00px;top:336.00px;width:879.00px;height:9.00px;background:transparent;background:linear-gradient(180deg,rgba(0,0,0,.17),rgba(0,0,0,.04) 60%,rgba(0,0,0,0));"></div>
<div style="left:78.25px;top:158.00px;width:1.50px;height:92.00px;background:#d6d6d6;"></div>
<div style="left:354.25px;top:158.00px;width:1.50px;height:92.00px;background:#d6d6d6;"></div>
<div style="left:460.25px;top:158.00px;width:1.50px;height:92.00px;background:#d6d6d6;"></div>
<div style="left:158.25px;top:250.00px;width:1.50px;height:92.00px;background:#d6d6d6;"></div>
<svg style="left:24.0px;top:188.0px" width="22" height="30" viewBox="0 0 22 30"><path d="M16 4.5L6 15L16 25.5" stroke="#484848" stroke-width="5" fill="none" stroke-linejoin="round" stroke-linecap="round"/></svg>
<svg style="left:100.5px;top:192.0px" width="30" height="24" viewBox="0 0 30 24"><path d="M4 13L11 19.6L26 4.6" stroke="#1fae7b" stroke-width="5.6" fill="none" stroke-linejoin="round" stroke-linecap="round"/></svg>
<span style="top:188.61px;font-size:32px;line-height:32px;color:#1fae7b;white-space:pre;left:143.00px;-webkit-text-stroke:0.6px;">1</span>
<svg style="left:191.0px;top:193.5px" width="24" height="24" viewBox="0 0 24 24"><path d="M4.6 4.6L19.4 19.4M19.4 4.6L4.6 19.4" stroke="#e94f3f" stroke-width="5.6" fill="none" stroke-linecap="round"/></svg>
<span style="top:190.20px;font-size:30px;line-height:30px;color:#e94f3f;white-space:pre;left:226.40px;letter-spacing:1.7px;-webkit-text-stroke:0.9px;">--</span>
<svg style="left:278.5px;top:188.6px" width="32" height="32" viewBox="0 0 32 32"><path d="M18.6 3.2A13.1 13.1 0 1 1 13.4 3.2" stroke="#a9a9a9" stroke-width="4.4" fill="none"/></svg>
<span style="top:190.20px;font-size:30px;line-height:30px;color:#a9a9a9;white-space:pre;left:320.80px;letter-spacing:1.7px;-webkit-text-stroke:0.9px;">--</span>
<span style="top:187.57px;font-size:31.8px;line-height:31.8px;color:#555;white-space:pre;left:376.50px;letter-spacing:-0.1px;-webkit-text-stroke:0.3px;">1.06</span>
<svg style="left:588.3px;top:187.8px" width="32" height="32" viewBox="0 0 32 32"><circle cx="16" cy="16" r="8.6" stroke="#484848" stroke-width="2.8" fill="none"/><path d="M16 3.6V8.6M16 23.4V28.4M3.6 16H8.6M23.4 16H28.4" stroke="#484848" stroke-width="5" stroke-linecap="round"/></svg>
<div style="left:663.00px;top:178.00px;width:767.00px;height:51.50px;background:#fff;border:2px solid #d4d4d4;border-radius:26px;box-shadow:inset 0 2px 4px rgba(0,0,0,.16);"></div>
<span style="top:190.22px;font-size:26.2px;line-height:26.2px;color:#555;white-space:pre;left:683.50px;letter-spacing:0.5px;-webkit-text-stroke:0.25px;">http://localhost:3000/</span>
<div style="left:16.30px;top:288.20px;width:19.40px;height:19.40px;background:#ffb61c;border-radius:50%;"></div>
<svg style="left:50.3px;top:283.0px" width="14" height="30" viewBox="0 0 14 30"><path d="M7 6V24" stroke="#484848" stroke-width="3.4"/><path d="M3 8L7 2.6L11 8ZM3 22L7 27.4L11 22Z" fill="#484848" stroke="#484848" stroke-width="1.8" stroke-linejoin="round"/></svg>
<svg style="left:103.0px;top:282.0px" width="30" height="30" viewBox="0 0 30 30"><path d="M24.2 9.2A11 11 0 1 0 26 17.5" stroke="#444" stroke-width="4.6" fill="none"/><path d="M28.5 1.5V13H17Z" fill="#444"/></svg>
<span style="top:279.38px;font-size:28.6px;line-height:28.6px;color:#8a8a8a;white-space:pre;left:1164.00px;letter-spacing:0.15px;">1000 x 660</span>
<span style="top:283.03px;font-size:24.3px;line-height:24.3px;color:#8a8a8a;white-space:pre;left:1321.50px;letter-spacing:0.3px;">(44%)</span>
<div style="left:1402.50px;top:284.00px;width:22.00px;height:22.00px;background:#8a8a8a;border-radius:50%;"></div>
<span style="top:286.11px;font-size:19px;line-height:19px;color:#f8f8f8;white-space:pre;left:1409.20px;font-weight:bold;font-family:'Liberation Serif',serif;">i</span>
<div style="left:0.00px;top:84.00px;width:1438.00px;height:73.30px;background:#fff;"></div>
<div style="left:0.00px;top:156.80px;width:1438.00px;height:1.40px;background:#b9b9b9;"></div>
<div style="left:216.00px;top:92.00px;width:974.00px;height:56.00px;background:#f1f3f4;border-radius:28px;"></div>
<svg style="left:28.0px;top:104.0px" width="32" height="32" viewBox="0 0 32 32"><path d="M28 16H5.5M15.5 5.5L5 16L15.5 26.5" stroke="#bcbdbf" stroke-width="3" fill="none" stroke-linecap="round" stroke-linejoin="round"/></svg>
<svg style="left:92.5px;top:104.0px" width="32" height="32" viewBox="0 0 32 32"><path d="M4 16H26.5M16.5 5.5L27 16L16.5 26.5" stroke="#bcbdbf" stroke-width="3" fill="none" stroke-linecap="round" stroke-linejoin="round"/></svg>
<svg style="left:156.3px;top:104.0px" width="32" height="32" viewBox="0 0 32 32"><path d="M25.3 8.5A11.6 11.6 0 1 0 27.4 19" stroke="#5f6368" stroke-width="3" fill="none"/><path d="M28.2 3.6V13.4H18.4Z" fill="#5f6368"/></svg>
<svg style="left:238.0px;top:106.0px" width="28" height="28" viewBox="0 0 28 28"><circle cx="14" cy="14" r="12" stroke="#5f6368" stroke-width="2.6" fill="none"/><path d="M14 12.5V20.5" stroke="#5f6368" stroke-width="2.8"/><circle cx="14" cy="8.3" r="1.7" fill="#5f6368"/></svg>
<span style="left:284.00px;top:105.05px;font-size:29px;line-height:29px;color:#7a7f85;white-space:pre;letter-spacing:0px;-webkit-text-stroke:0.2px"><b style="font-weight:normal;color:#202124">localhost</b>:3000/__/#/tests/__all</span>
<svg style="left:1139.7px;top:105.3px" width="29" height="29" viewBox="0 0 32 32"><path d="M16 3.2L19.7 12.3L29.4 13L22 19.3L24.3 28.8L16 23.6L7.7 28.8L10 19.3L2.6 13L12.3 12.3Z" stroke="#5f6368" stroke-width="3" fill="none" stroke-linejoin="miter"/></svg>
<div style="left:1223.00px;top:105.00px;width:30.00px;height:30.00px;background:#2b2b2b;border-radius:50%;"></div>
<span style="top:110.29px;font-size:19.5px;line-height:19.5px;color:#fff;white-space:pre;left:1227.60px;font-weight:bold;letter-spacing:-1px;">cy</span>
<div style="left:1286.30px;top:104.00px;width:1.60px;height:32.00px;background:#c8c8c8;"></div>
<svg style="left:1314.7px;top:103.0px" width="34" height="34" viewBox="0 0 34 34"><circle cx="17" cy="17" r="17" fill="#5f6368"/><circle cx="17" cy="12" r="5.6" fill="#fff"/><path d="M5.5 26.5C8 21.5 12 20.3 17 20.3S26 21.5 28.5 26.5C25.5 30 21.5 31.6 17 31.6S8.5 30 5.5 26.5Z" fill="#fff"/></svg>
<div style="left:1393.00px;top:106.50px;width:6.00px;height:6.00px;background:#5f6368;border-radius:50%;"></div>
<div style="left:1393.00px;top:117.00px;width:6.00px;height:6.00px;background:#5f6368;border-radius:50%;"></div>
<div style="left:1393.00px;top:127.50px;width:6.00px;height:6.00px;background:#5f6368;border-radius:50%;"></div>
<div style="left:0.00px;top:0.00px;width:1438.00px;height:84.00px;background:#282a36;"></div>
<div style="left:26.00px;top:31.00px;width:24.00px;height:24.00px;background:#ff5f57;border-radius:50%;"></div>
<div style="left:66.00px;top:31.00px;width:24.00px;height:24.00px;background:#febc2e;border-radius:50%;"></div>
<div style="left:106.00px;top:31.00px;width:24.00px;height:24.00px;background:#28c840;border-radius:50%;"></div>
<div style="left:156.00px;top:16.00px;width:480.00px;height:68.00px;background:#fff;border-radius:16px 16px 0 0;"></div>
<div style="left:140.00px;top:68.00px;width:16.00px;height:16.00px;background:transparent;background:radial-gradient(circle at 0 0,rgba(255,255,255,0) 15.5px,#fff 16.5px);"></div>
<div style="left:636.00px;top:68.00px;width:16.00px;height:16.00px;background:transparent;background:radial-gradient(circle at 100% 0,rgba(255,255,255,0) 15.5px,#fff 16.5px);"></div>
<div style="left:180.00px;top:34.00px;width:32.00px;height:32.00px;background:#2b2b2b;border-radius:50%;"></div>
<span style="top:38.97px;font-size:22px;line-height:22px;color:#fff;white-space:pre;left:184.40px;font-weight:bold;letter-spacing:-1px;">cy</span>
<span style="top:35.82px;font-size:26.2px;line-height:26.2px;color:#3c4043;white-space:pre;left:227.60px;letter-spacing:-0.1px;-webkit-text-stroke:0.2px;">client</span>
<svg style="left:593.7px;top:40.0px" width="20" height="20" viewBox="0 0 20 20"><path d="M3 3L17 17M17 3L3 17" stroke="#4a4d51" stroke-width="2.6" fill="none"/></svg>
<svg style="left:667.0px;top:37.0px" width="26" height="26" viewBox="0 0 26 26"><path d="M13 2V24M2 13H24" stroke="#9a9ca3" stroke-width="3" fill="none" stroke-linecap="round"/></svg>
</div>
</body>
</html>
